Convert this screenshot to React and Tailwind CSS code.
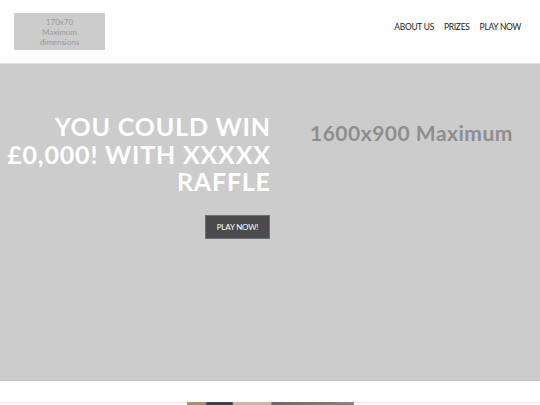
export default function App() {
  return (
    <div className="w-[540px] h-[405px] overflow-hidden bg-white font-['Lato',sans-serif]">
      <header className="h-[64px] flex items-start justify-between pl-[14px] pr-[19px] border-b border-[#e3e3e3]">
        <div className="mt-[13px] w-[91px] h-[37px] bg-[#cccccc] text-[#9a9a9a] text-[8px] leading-[10px] flex flex-col items-center justify-center text-center">
          <span>170x70</span>
          <span>Maximum</span>
          <span>dimensions</span>
        </div>
        <nav className="mt-[21px] flex gap-[10px] text-[8.5px] text-[#222] tracking-[-0.3px]">
          <span>ABOUT US</span>
          <span>PRIZES</span>
          <span>PLAY NOW</span>
        </nav>
      </header>
      <section className="h-[317px] bg-[#cccccc] border-b border-[#c2c2c2] grid grid-cols-2">
        <div className="pt-[49px] flex flex-col items-end">
          <h1 className="text-right text-white font-bold text-[25px] leading-[27.5px] uppercase tracking-[0.8px] mr-[-0.8px]">
            You could win
            <br />
            £0,000! with xxxxx
            <br />
            Raffle
          </h1>
          <button className="mt-[19px] w-[65px] h-[24px] bg-[#4b4b4d] border border-[#6e6e6e] text-white text-[8px] tracking-[-0.2px] flex items-center justify-center">
            PLAY NOW!
          </button>
        </div>
        <div className="pl-[40px] pt-[56px]">
          <div className="text-[21px] font-bold text-[#8e8e8e] leading-[26px] tracking-[0.5px]">1600x900 Maximum</div>
        </div>
      </section>
      <div className="h-[21px]" />
      <div className="relative h-[2px] border-t border-[#ececec]">
        <div className="absolute left-[187px] top-[-1px] w-[167px] h-[3px] bg-[linear-gradient(90deg,#a58e78_0%,#a58e78_11%,#3f4150_12%,#3f4150_27%,#c9b9a2_28%,#c9b9a2_50%,#6e6862_51%,#8a837c_100%)]" />
      </div>
    </div>
  );
}
